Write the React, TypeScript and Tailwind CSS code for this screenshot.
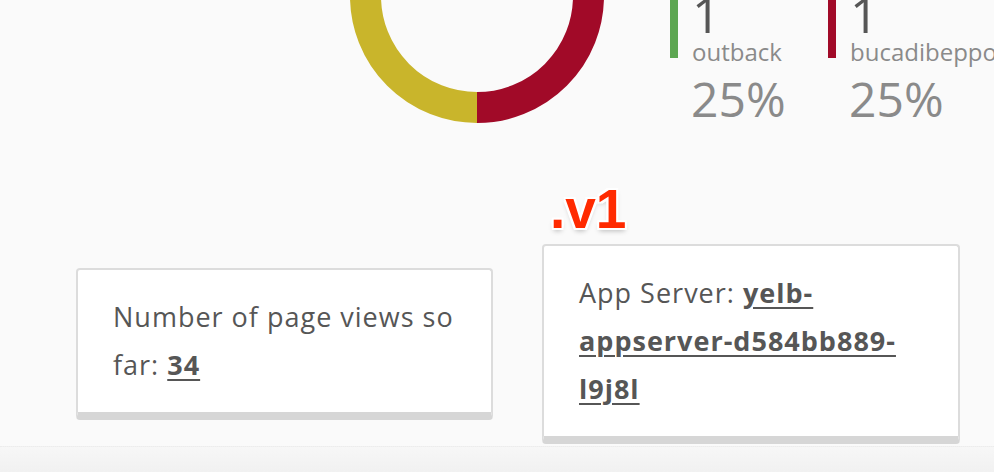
import React from "react";

const legend = [
  { count: 1, name: "outback", pct: "25%", color: "bg-[#5ca651]" },
  { count: 1, name: "bucadibeppo", pct: "25%", color: "bg-[#a10a28]" },
];

function Donut() {
  // only the bottom half of the chart is in view, the page is scrolled
  return (
    <svg width="254" height="254" viewBox="0 0 254 254" className="shrink-0">
      <g fill="none" strokeWidth="31">
        <path d="M 127 15.5 A 111.5 111.5 0 0 1 238.5 127" stroke="#5ca651" />
        <path d="M 238.5 127 A 111.5 111.5 0 0 1 127 238.5" stroke="#a10a28" />
        <path d="M 127 238.5 A 111.5 111.5 0 0 1 15.5 127" stroke="#c9b52b" />
        <path d="M 15.5 127 A 111.5 111.5 0 0 1 127 15.5" stroke="#5aa3c8" />
      </g>
    </svg>
  );
}

function Card({ children, className }: { children: React.ReactNode; className?: string }) {
  return (
    <div
      className={`bg-white border-2 border-[#dcdcdc] border-b-[8px] border-b-[#d6d6d6] rounded-[4px] px-[35px] py-[23px] text-[27px] tracking-[1px] leading-[48px] text-[#565656] ${className ?? ""}`}
    >
      {children}
    </div>
  );
}

export default function App() {
  return (
    <div
      className="w-[994px] h-[472px] overflow-hidden bg-[#fafafa] flex flex-col"
      style={{ fontFamily: '"Open Sans", "Noto Sans", sans-serif' }}
    >
      <div className="-mt-[131px] h-[254px] shrink-0 flex items-start pl-[350px]">
        <Donut />
        <div className="ml-[66px] mt-[89px] flex gap-[150px]">
          {legend.map((l) => (
            <div key={l.name} className="flex flex-col w-[8px]">
              <div className="flex h-[100px]">
                <div className={`w-[8px] h-[100px] shrink-0 ${l.color}`} />
                <div className="pl-[14px] pt-[31px]">
                  <div className="text-[50px] leading-[50px] text-[#565656]">{l.count}</div>
                  <div className="mt-[1px] text-[24px] leading-[24px] text-[#8a8a8a] whitespace-nowrap">{l.name}</div>
                </div>
              </div>
              <div className="pl-[21px] mt-[17px] text-[48px] leading-[48px] text-[#8a8a8a] whitespace-nowrap">
                {l.pct}
              </div>
            </div>
          ))}
        </div>
      </div>

      <div className="mt-[121px] flex items-center pl-[76px] gap-[49px]">
        <Card className="w-[417px]">
          Number of page views so far:{" "}
          <a className="font-bold underline underline-offset-4 decoration-2">34</a>
        </Card>
        <div className="relative">
          <div
            className="absolute left-[8px] -top-[62px] text-[55px] leading-[54px] font-bold text-[#ff2a00]"
            style={{
              fontFamily: '"Liberation Sans", Arial, sans-serif',
              textShadow:
                "2px 0 0 #fff, -2px 0 0 #fff, 0 2px 0 #fff, 0 -2px 0 #fff, 2px 2px 0 #fff, -2px -2px 0 #fff, 2px -2px 0 #fff, -2px 2px 0 #fff, 0 3px 5px rgba(0,0,0,0.25)",
            }}
          >
            .v1
          </div>
          <Card className="w-[418px]">
            App Server:{" "}
            <a className="font-bold underline underline-offset-4 decoration-2">
              yelb-
              <br />
              appserver-d584bb889-
              <br />
              l9j8l
            </a>
          </Card>
        </div>
      </div>

      <div className="mt-[2px] flex-1 border-t border-dotted border-[#ececec] bg-gradient-to-b from-[#f7f7f7] to-[#f1f1f1]" />
    </div>
  );
}
